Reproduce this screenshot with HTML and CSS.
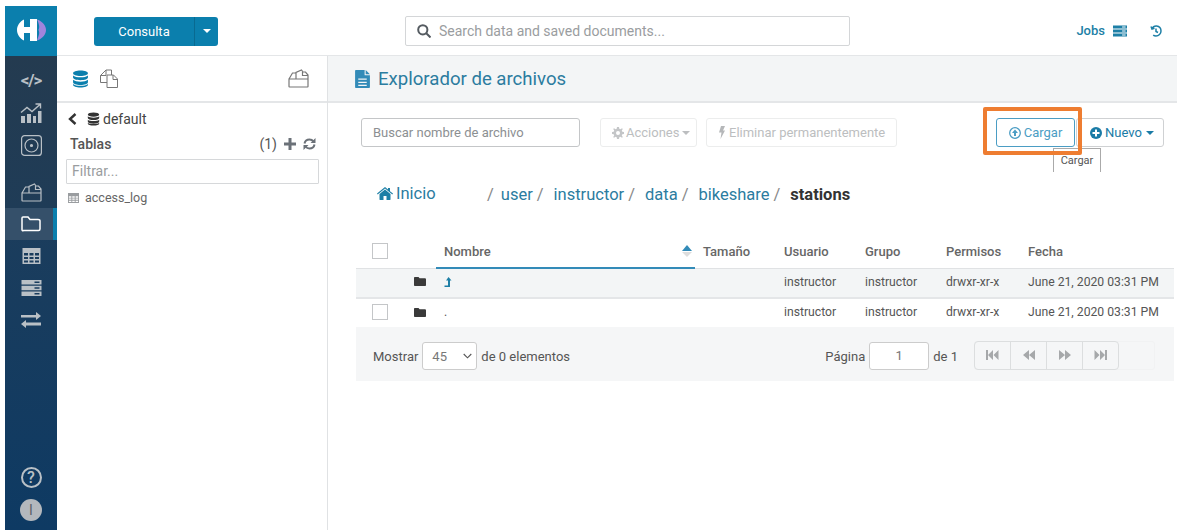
FILE: index.html
```html
<!DOCTYPE html>
<html lang="en">
<head>
    <meta charset="UTF-8">
    <meta name="viewport" content="width=device-width, initial-scale=1.0">
    <title>Explorador de archivos</title>
    <link rel="stylesheet" href="styles.css">
</head>
<body>
    <svg class="defs" width="0" height="0">
        <defs>
            <symbol id="i-db" viewBox="0 0 16 16"><path fill="currentColor" d="M8 0c4 0 7 1 7 2.600S12 5.200 8 5.200 1 4.200 1 2.600 4 0 8 0zM1 4.600c1.300 1.200 4 1.800 7 1.800s5.700-.6 7-1.800v2.100C15 8.200 12 9.200 8 9.200S1 8.200 1 6.700zM1 8.800c1.300 1.200 4 1.800 7 1.800s5.700-.6 7-1.800v2.300c0 1.600-3 2.600-7 2.600s-7-1-7-2.600zM1 12.600c1.300 1.200 4 1.700 7 1.700s5.700-.5 7-1.700v.8C15 15 12 16 8 16s-7-1-7-2.600z"/></symbol>
            <symbol id="i-folder-open" viewBox="0 0 21 19"><path fill="none" stroke="currentColor" stroke-width="1.200" d="M1 10v7.500c0 .3.200.5.500.5h18c.3 0 .5-.2.500-.5V10zM1 10l3.500-6h4M8 10V3.500L13.500 1l1.500 2h2.500L20 6v4M14.500 3v3.500H20"/></symbol>
            <symbol id="i-folder" viewBox="0 0 16 12"><path fill="currentColor" d="M1 0h5l1.500 1.500H14.500c.8 0 1.500.7 1.500 1.500v8c0 .6-.5 1-1 1H1c-.6 0-1-.4-1-1V1c0-.6.4-1 1-1z"/></symbol>
            <symbol id="i-table" viewBox="0 0 18 16"><path fill="currentColor" fill-rule="evenodd" d="M0 0h18v16H0zM1.500 5v2.500h4V5zm5.500 0v2.500h4V5zm5.500 0v2.500h4V5zM1.500 9v2h4V9zM7 9v2h4V9zm5.500 0v2h4V9zM1.500 12.500v2h4v-2zm5.500 0v2h4v-2zm5.500 0v2h4v-2z"/></symbol>
            <symbol id="i-servers" viewBox="0 0 20 16"><path fill="currentColor" fill-rule="evenodd" d="M0 0h20v4.500H0zm13 1.500v1.500h5V1.500zM0 5.700h20v4.500H0zm13 1.500v1.500h5V7.200zM0 11.500h20V16H0zm13 1.500v1.500h5V13z"/></symbol>
        </defs>
    </svg>

    <nav class="rail">
        <div class="rail-logo">
            <svg width="29" height="22" viewBox="0 0 29 22">
                <path fill="#fff" d="M7 .5C3 2.500 0 6.500 0 11s3 8.500 7 10.500V14h6v8h7V0h-7v8H7z"/>
                <path fill="#a084dc" d="M20 .5C26 2.500 29 7 29 11s-3 8.500-9 10.500c2-5.500 3-7.500 1.500-10.500C23 8 22 5 20 .5z"/>
            </svg>
        </div>
        <div class="rail-dark">
            <a class="rail-item code">&lt;/&gt;</a>
            <a class="rail-item">
                <svg width="22" height="20" viewBox="0 0 22 20" fill="currentColor"><path d="M1 13h4v7H1zM7 11h4v9H7zM13 13h3v7h-3zM18 8h3.500v12H18z"/><path fill="none" stroke="currentColor" stroke-width="1.400" d="M1 9.500l6-5 5 4 8-7M15.500 1h5v4.500"/></svg>
            </a>
            <a class="rail-item">
                <svg width="21" height="21" viewBox="0 0 21 21" fill="none" stroke="currentColor" stroke-width="1.200"><rect x=".6" y=".6" width="19.800" height="19.800" rx="3"/><circle cx="10.500" cy="10.500" r="6.500"/><circle cx="10.500" cy="10.500" r="1" fill="currentColor"/></svg>
            </a>
            <a class="rail-item rail-gap"><svg width="21" height="19"><use href="#i-folder-open"/></svg></a>
        </div>
        <div class="rail-blue">
            <a class="rail-item rail-active">
                <svg width="20" height="16" viewBox="0 0 20 16" fill="none" stroke="#fff" stroke-width="1.500"><path d="M1 2c0-.6.4-1 1-1h5l2 2.500h8c1 0 2 .5 2 1.500v8c0 1-.6 1.500-1.500 1.500h-15C1.500 15 1 14.500 1 13.500z"/></svg>
            </a>
            <a class="rail-item"><svg width="19" height="16"><use href="#i-table"/></svg></a>
            <a class="rail-item"><svg width="21" height="16"><use href="#i-servers"/></svg></a>
            <a class="rail-item">
                <svg width="20" height="16" viewBox="0 0 20 16" fill="currentColor"><path d="M0 3h15V0l5 4-5 4V5.500H0zM20 10.500H5V8l-5 4 5 4v-2.500h15z"/></svg>
            </a>
            <div class="rail-bottom">
                <span class="help">?</span>
                <span class="avatar">I</span>
            </div>
        </div>
    </nav>

    <div class="page">
        <header class="topbar">
            <div class="query-btn">
                <span class="query-label">Consulta</span>
                <span class="query-caret"><i class="caret"></i></span>
            </div>
            <div class="search">
                <svg width="14" height="14" viewBox="0 0 14 14" fill="none" stroke="#555b61" stroke-width="2"><circle cx="5.800" cy="5.800" r="4.600"/><path d="M9 9l4.500 4.500"/></svg>
                <span>Search data and saved documents...</span>
            </div>
            <div class="top-right">
                <span class="jobs">Jobs</span>
                <svg class="jobs-icon" width="14" height="12"><use href="#i-servers"/></svg>
                <svg class="history" width="12" height="12" viewBox="0 0 12 12" fill="none" stroke="#1d7fa6" stroke-width="1.500"><path d="M1 1.500l1 2.500 2.500-.7M2 3.500C3 1.500 5 .9 6.500 1c2.500.2 4.500 2.200 4.500 5s-2.300 5-5 5c-1 0-2-.3-2.800-.9M6 3.500v3l2 1"/></svg>
            </div>
        </header>

        <div class="content">
            <aside class="side">
                <div class="side-tabs">
                    <svg class="tab-db" width="17" height="18"><use href="#i-db"/></svg>
                    <svg class="tab-docs" width="19" height="19" viewBox="0 0 19 19" fill="none" stroke="currentColor"><path d="M12.500 6V1H7L1.500 6.500V13.500H8M7 1v5.500H1.500"/><path d="M8 6h6.500l4 4v8.500H8zM14 6v4.500h4.500"/></svg>
                    <svg class="tab-open" width="21" height="19"><use href="#i-folder-open"/></svg>
                </div>
                <div class="db-line">
                    <svg class="back" width="9" height="12" viewBox="0 0 9 12" fill="none" stroke="#333" stroke-width="2.400"><path d="M7.500 1L2 6l5.500 5"/></svg>
                    <svg class="db-mini" width="13" height="14"><use href="#i-db"/></svg>
                    <span>default</span>
                </div>
                <div class="tables-head">
                    <span class="tables-title">Tablas</span>
                    <span class="tables-count">(1)</span>
                    <svg width="12" height="12" viewBox="0 0 12 12" fill="#6b7178"><path d="M4.500 0h3v4.500H12v3H7.500V12h-3V7.500H0v-3h4.500z"/></svg>
                    <svg width="13" height="12" viewBox="0 0 13 12" fill="none" stroke="#6b7178" stroke-width="2"><path d="M1.500 5.500C2 3 4 1.500 6.500 1.500c1.500 0 3 .7 4 2M11.500 6.500C11 9 9 10.500 6.500 10.500c-1.500 0-3-.7-4-2"/><path fill="#6b7178" stroke="none" d="M12.500 0v5h-5zM.500 12V7h5z"/></svg>
                </div>
                <div class="filter">Filtrar...</div>
                <div class="table-item">
                    <svg width="11" height="10"><use href="#i-table"/></svg>
                    <span>access_log</span>
                </div>
            </aside>

            <main class="files">
                <div class="page-head">
                    <svg width="15" height="18" viewBox="0 0 14 17" fill="#338bb8"><path fill-rule="evenodd" d="M1 0h8v5h5v11c0 .6-.4 1-1 1H1c-.6 0-1-.4-1-1V1c0-.6.4-1 1-1zM10 0l4 4h-4zM3 8v1.200h8V8zm0 3v1.200h8V11zm0 3v1h8v-1z"/></svg>
                    <h1>Explorador de archivos</h1>
                </div>

                <div class="file-body">
                    <div class="toolbar">
                        <div class="file-search">Buscar nombre de archivo</div>
                        <div class="btn btn-off acciones">
                            <svg width="12" height="12" viewBox="0 0 12 12" fill="#c4c6c8"><path fill-rule="evenodd" d="M5 0h2l.3 1.700 1.200.5L10 1.200 10.800 2 9.800 3.500l.5 1.200L12 5v2l-1.700.3-.5 1.200 1 1.500-.8.800-1.500-1-1.200.5L7 12H5l-.3-1.700-1.200-.5-1.500 1-.8-.8 1-1.500-.5-1.200L0 7V5l1.700-.3.5-1.200-1-1.500.8-.8 1.500 1 1.200-.5zM6 4a2 2 0 100 4 2 2 0 000-4z"/></svg>
                            Acciones <i class="caret caret-off"></i>
                        </div>
                        <div class="btn btn-off eliminar">
                            <svg width="6" height="13" viewBox="0 0 6 13" fill="#b5b7b9"><path d="M2 0h4L4 4.500h2L1.500 13 2.500 6.500H0z"/></svg>
                            Eliminar permanentemente
                        </div>
                        <div class="toolbar-right">
                            <div class="btn btn-upload">
                                <svg width="12" height="12" viewBox="0 0 12 12"><circle cx="6" cy="6" r="5.300" fill="none" stroke="#4b9dc4" stroke-width="1.300"/><path fill="#4b9dc4" d="M6 2.500L9 6H7v3H5V6H3z"/></svg>
                                Cargar
                            </div>
                            <div class="btn btn-new">
                                <svg width="12" height="12" viewBox="0 0 12 12"><circle cx="6" cy="6" r="6" fill="#1a7ba6"/><path fill="#fff" d="M5 2.500h2V5h2.500v2H7v2.500H5V7H2.500V5H5z"/></svg>
                                Nuevo <i class="caret caret-new"></i>
                            </div>
                            <div class="tooltip">Cargar</div>
                            <div class="highlight"></div>
                        </div>
                    </div>

                    <div class="crumbs">
                        <a class="crumb-home">
                            <svg width="16" height="13" viewBox="0 0 16 13" fill="#1d7fa6"><path d="M8 2.500L13.500 7v5.500c0 .3-.2.500-.5.500H9.500V9h-3v4H3c-.3 0-.5-.2-.5-.5V7zM8 0l3 2.500V1h2v3.200L16 6.500l-.7.900L8 1.500.7 7.400 0 6.500z"/></svg>
                            Inicio
                        </a>
                        <span class="sep first">/</span><a>user</a>
                        <span class="sep">/</span><a>instructor</a>
                        <span class="sep">/</span><a>data</a>
                        <span class="sep">/</span><a>bikeshare</a>
                        <span class="sep">/</span><b>stations</b>
                    </div>

                    <table class="file-table">
                        <thead>
                            <tr>
                                <th class="col-check"><span class="check"></span></th>
                                <th class="col-icon"></th>
                                <th class="col-name sorted">Nombre<span class="sort"></span></th>
                                <th class="col-size">Tamaño</th>
                                <th class="col-user">Usuario</th>
                                <th class="col-group">Grupo</th>
                                <th class="col-perm">Permisos</th>
                                <th class="col-date">Fecha</th>
                            </tr>
                        </thead>
                        <tbody>
                            <tr class="row-up">
                                <td></td>
                                <td class="folder"><svg width="12" height="9"><use href="#i-folder"/></svg></td>
                                <td class="name"><svg width="8" height="10" viewBox="0 0 7 10" fill="#1d7fa6"><path d="M4 0l3 3.500H5.500V10H0V8.500h3.500V3.500H1.500z"/></svg></td>
                                <td></td>
                                <td>instructor</td>
                                <td>instructor</td>
                                <td>drwxr-xr-x</td>
                                <td>June 21, 2020 03:31 PM</td>
                            </tr>
                            <tr>
                                <td><span class="check"></span></td>
                                <td class="folder"><svg width="12" height="9"><use href="#i-folder"/></svg></td>
                                <td class="name">.</td>
                                <td></td>
                                <td>instructor</td>
                                <td>instructor</td>
                                <td>drwxr-xr-x</td>
                                <td>June 21, 2020 03:31 PM</td>
                            </tr>
                        </tbody>
                    </table>

                    <div class="pager">
                        <span>Mostrar</span>
                        <div class="select">45 <svg width="9" height="6" viewBox="0 0 9 6" fill="none" stroke="#555" stroke-width="1.100"><path d="M.7 1l3.800 3.800L8.300 1"/></svg></div>
                        <span>de 0 elementos</span>
                        <span class="page-label">Página</span>
                        <div class="page-input">1</div>
                        <span>de 1</span>
                        <div class="page-track">
                            <div class="page-btns">
                                <span><svg width="13" height="10" viewBox="0 0 13 10" fill="#a6a8aa"><path d="M0 0h2v10H0zM2 5l5-5v10zM7.500 5l5-5v10z"/></svg></span>
                                <span><svg width="12" height="10" viewBox="0 0 12 10" fill="#a6a8aa"><path d="M0 5l6-5v10zM6 5l6-5v10z"/></svg></span>
                                <span><svg width="12" height="10" viewBox="0 0 12 10" fill="#a6a8aa"><path d="M12 5L6 0v10zM6 5L0 0v10z"/></svg></span>
                                <span><svg width="13" height="10" viewBox="0 0 13 10" fill="#a6a8aa"><path d="M13 0h-2v10h2zM11 5L6 0v10zM5.500 5l-5-5v10z"/></svg></span>
                            </div>
                        </div>
                    </div>
                </div>
            </main>
        </div>
    </div>
</body>
</html>
```
FILE: styles.css
```css
body {
    font-family: Roboto, "Liberation Sans", sans-serif;
    font-size: 13px;
    margin: 0;
    padding: 0;
    background-color: #fff;
    color: #444;
    display: flex;
    height: 530px;
    overflow: hidden;
}

.defs {
    position: absolute;
}

/* left rail */
.rail {
    width: 52px;
    margin: 6px 0 0 5px;
    flex: none;
    display: flex;
    flex-direction: column;
    color: #b9c0c6;
}

.rail-logo {
    height: 50px;
    background-color: #0b7fad;
    display: flex;
    align-items: center;
    justify-content: center;
    padding-bottom: 2px;
    box-sizing: border-box;
}

.rail-dark {
    height: 152px;
    background: linear-gradient(#243b50, #1f3c57);
    padding-top: 7px;
    box-sizing: border-box;
}

.rail-blue {
    flex: 1;
    background: linear-gradient(#1c3d5c, #0e3a63);
    display: flex;
    flex-direction: column;
}

.rail-item {
    height: 32px;
    display: flex;
    align-items: center;
    justify-content: center;
}

.rail-item.code {
    font-size: 17px;
    font-weight: 700;
    height: 34px;
    letter-spacing: -1px;
}

.rail-gap {
    margin-top: 15px;
}

.rail-active {
    background-color: #35506a;
    border-right: 4px solid #0b7fad;
    padding-left: 4px;
}

.rail-bottom {
    margin-top: auto;
    display: flex;
    flex-direction: column;
    align-items: center;
    gap: 11px;
    padding-bottom: 9px;
}

.help {
    width: 17px;
    height: 17px;
    border: 2px solid #b9c0c6;
    border-radius: 50%;
    font-size: 16px;
    font-weight: 500;
    text-align: center;
    line-height: 17px;
}

.avatar {
    width: 22px;
    height: 22px;
    border-radius: 50%;
    background-color: #b4b8bd;
    color: #5d6268;
    text-align: center;
    line-height: 22px;
    font-size: 14px;
}

/* top bar */
.page {
    flex: 1;
    display: flex;
    flex-direction: column;
    min-width: 0;
}

.topbar {
    height: 55px;
    border-bottom: 1px solid #e4e6e8;
    display: flex;
    align-items: center;
    padding: 0 15px 0 37px;
    flex: none;
}

.query-btn {
    display: flex;
    width: 124px;
    height: 29px;
    margin-top: 7px;
    background-color: #0b7fad;
    border-radius: 3px;
    color: #fff;
    font-size: 13px;
}

.query-label {
    flex: 1;
    text-align: center;
    line-height: 29px;
}

.query-caret {
    width: 23px;
    border-left: 1px solid #096a91;
    display: flex;
    align-items: center;
    justify-content: center;
}

.caret {
    display: inline-block;
    border-left: 4px solid transparent;
    border-right: 4px solid transparent;
    border-top: 4px solid #fff;
}

.search {
    margin: 7px 0 0 187px;
    width: 432px;
    height: 28px;
    border: 1px solid #d4d6d8;
    border-radius: 2px;
    display: flex;
    align-items: center;
    gap: 8px;
    padding-left: 11px;
    color: #9a9da0;
    font-size: 14px;
}

.top-right {
    margin: 6px 0 0 auto;
    display: flex;
    align-items: center;
    color: #1d7fa6;
}

.jobs {
    font-weight: 500;
    font-size: 13px;
}

.jobs-icon {
    margin-left: 8px;
    color: #1d7fa6;
}

.history {
    margin-left: 23px;
}

.content {
    flex: 1;
    display: flex;
    min-height: 0;
}

/* side panel */
.side {
    width: 270px;
    flex: none;
    border-right: 1px solid #e0e2e4;
}

.side-tabs {
    height: 45px;
    border-bottom: 2px solid #e4e6e8;
    display: flex;
    align-items: center;
    padding: 0 18px 0 15px;
    color: #777;
}

.tab-db {
    color: #0b7fad;
}

.tab-docs {
    margin-left: 10px;
}

.tab-open {
    margin-left: auto;
}

.db-line {
    display: flex;
    align-items: center;
    padding: 8px 0 0 11px;
    font-size: 14px;
    height: 16px;
    color: #444;
}

.back {
    margin-right: 10px;
}

.db-mini {
    color: #333;
    margin-right: 3px;
}

.tables-head {
    display: flex;
    align-items: center;
    padding: 8px 11px 0 13px;
    gap: 7px;
    font-size: 14px;
    color: #555;
    height: 17px;
}

.tables-title {
    font-weight: 500;
    margin-right: auto;
}

.filter {
    margin: 7px 8px 0 9px;
    height: 23px;
    border: 1px solid #d6d8da;
    border-radius: 1px;
    color: #9a9da0;
    padding-left: 5px;
    line-height: 23px;
    font-size: 14px;
}

.table-item {
    display: flex;
    align-items: center;
    gap: 6px;
    padding: 6px 0 0 11px;
    font-size: 12.500px;
    color: #666;
}

.table-item svg {
    color: #9a9da0;
}

/* main panel */
.files {
    flex: 1;
    min-width: 0;
}

.page-head {
    height: 45px;
    background-color: #f3f5f6;
    border-bottom: 2px solid #e4e6e8;
    display: flex;
    align-items: center;
    gap: 8px;
    padding-left: 27px;
}

.page-head h1 {
    margin: 0;
    font-size: 18.600px;
    font-weight: 400;
    color: #2b7c9f;
}

.file-body {
    padding: 15px 3px 0 28px;
}

.toolbar {
    display: flex;
    align-items: flex-start;
    height: 29px;
    margin: 0 10px 0 5px;
}

.file-search {
    width: 219px;
    height: 29px;
    border: 1px solid #c4c6c8;
    border-radius: 3px;
    line-height: 27px;
    padding-left: 11px;
    box-sizing: border-box;
    color: #8c8f92;
}

.btn {
    height: 29px;
    box-sizing: border-box;
    border: 1px solid #d4d6d8;
    border-radius: 3px;
    display: flex;
    align-items: center;
    gap: 3px;
}

.btn-off {
    color: #bcbec0;
    border-color: #eceded;
    padding-left: 11px;
}

.acciones {
    margin-left: 20px;
    width: 97px;
    gap: 2px;
}

.eliminar {
    margin-left: 9px;
    width: 191px;
    gap: 4px;
    padding-left: 12px;
}

.caret-off {
    border-top-color: #bcbec0;
    margin-left: 1px;
}

.toolbar-right {
    margin-left: auto;
    display: flex;
    gap: 1px;
    position: relative;
}

.btn-upload {
    width: 79px;
    justify-content: center;
    border-color: #4b9dc4;
    color: #4b9dc4;
}

.btn-new {
    width: 88px;
    justify-content: center;
    padding-left: 4px;
    color: #1a7ba6;
    border-color: #cfd1d3;
}

.caret-new {
    border-top-color: #1a7ba6;
    margin-left: 1px;
}

.highlight {
    position: absolute;
    left: -13px;
    top: -11px;
    width: 99px;
    height: 48px;
    border: 4px solid #ee7d31;
    border-radius: 2px;
    box-sizing: border-box;
}

.tooltip {
    position: absolute;
    left: 57px;
    top: 30px;
    width: 48px;
    height: 24px;
    border: 1px solid #aaa;
    border-bottom: 0;
    background-color: #fff;
    box-sizing: border-box;
    text-align: center;
    font-size: 11px;
    line-height: 24px;
    color: #555;
}

.crumbs {
    margin-top: 36px;
    height: 22px;
    display: flex;
    align-items: center;
    font-size: 16.500px;
    color: #888;
    padding-left: 21px;
}

.crumbs a {
    color: #2b7c9f;
}

.crumbs b {
    color: #333;
    font-weight: 700;
}

.crumb-home {
    display: flex;
    align-items: center;
    gap: 3px;
    width: 110px;
    margin-top: -2px;
}

.sep {
    margin: 0 10px 0 4px;
}

.sep.first {
    margin: 0 7px 0 0;
}

/* table */
.file-table {
    margin-top: 32px;
    width: 818px;
    border-collapse: collapse;
    table-layout: fixed;
    font-size: 12.200px;
    color: #555;
}

.file-table th {
    height: 31px;
    text-align: left;
    font-size: 13px;
    font-weight: 500;
    padding: 0 0 2px 8px;
    border-bottom: 1px solid #e0e2e4;
    color: #666;
    box-sizing: border-box;
}

.file-table td {
    padding: 0 0 2px 8px;
    height: 29px;
    box-sizing: border-box;
}

.file-table .row-up td {
    height: 30px;
}

.col-check { width: 48px; }
.col-icon { width: 32px; }
.col-name { width: 259px; }
.col-size { width: 81px; }
.col-user { width: 81px; }
.col-group { width: 81px; }
.col-perm { width: 82px; }
.col-date { width: 154px; }

.file-table th.col-check,
.file-table td:first-child {
    padding-left: 16px;
}

.file-table th.col-name {
    position: relative;
    border-bottom: 2px solid #338bb8;
}

.sort {
    position: absolute;
    right: 3px;
    top: 8px;
    border-left: 5px solid transparent;
    border-right: 5px solid transparent;
    border-bottom: 6px solid #338bb8;
}

.sort::after {
    content: "";
    position: absolute;
    left: -5px;
    top: 7px;
    border-left: 5px solid transparent;
    border-right: 5px solid transparent;
    border-top: 5px solid #ddd;
}

.check {
    display: block;
    width: 14px;
    height: 14px;
    border: 1px solid #c4c6c8;
}

.row-up td {
    background-color: #f3f5f6;
    border-bottom: 2px solid #e4e6e8;
}

.folder svg {
    color: #3a3a3a;
    display: block;
    margin-left: 2px;
}

.name svg {
    display: block;
}

.pager {
    height: 54px;
    background-color: #f5f6f7;
    display: flex;
    align-items: center;
    padding: 4px 19px 0 17px;
    box-sizing: border-box;
    color: #555;
}

.select {
    width: 55px;
    height: 28px;
    border: 1px solid #ccc;
    border-radius: 3px;
    background-color: #fff;
    margin: 0 4px;
    display: flex;
    align-items: center;
    justify-content: space-between;
    padding: 0 4px 0 9px;
    box-sizing: border-box;
    color: #777;
}

.page-label {
    margin-left: auto;
}

.page-input {
    width: 60px;
    height: 28px;
    border: 1px solid #ccc;
    border-radius: 3px;
    background-color: #fff;
    margin: 0 4px;
    box-sizing: border-box;
    text-align: center;
    line-height: 26px;
    color: #777;
}

.page-track {
    margin-left: 16px;
    width: 181px;
    border: 1px solid #f1f2f3;
    border-radius: 3px;
    box-sizing: border-box;
    margin-top: -2px;
}

.page-btns {
    display: flex;
    width: 143px;
    height: 27px;
    outline: 1px solid #dcdedf;
    border-radius: 3px;
}

.page-btns span {
    flex: 1;
    display: flex;
    align-items: center;
    justify-content: center;
    border-left: 1px solid #dcdedf;
}

.page-btns span:first-child {
    border-left: 0;
}
```
